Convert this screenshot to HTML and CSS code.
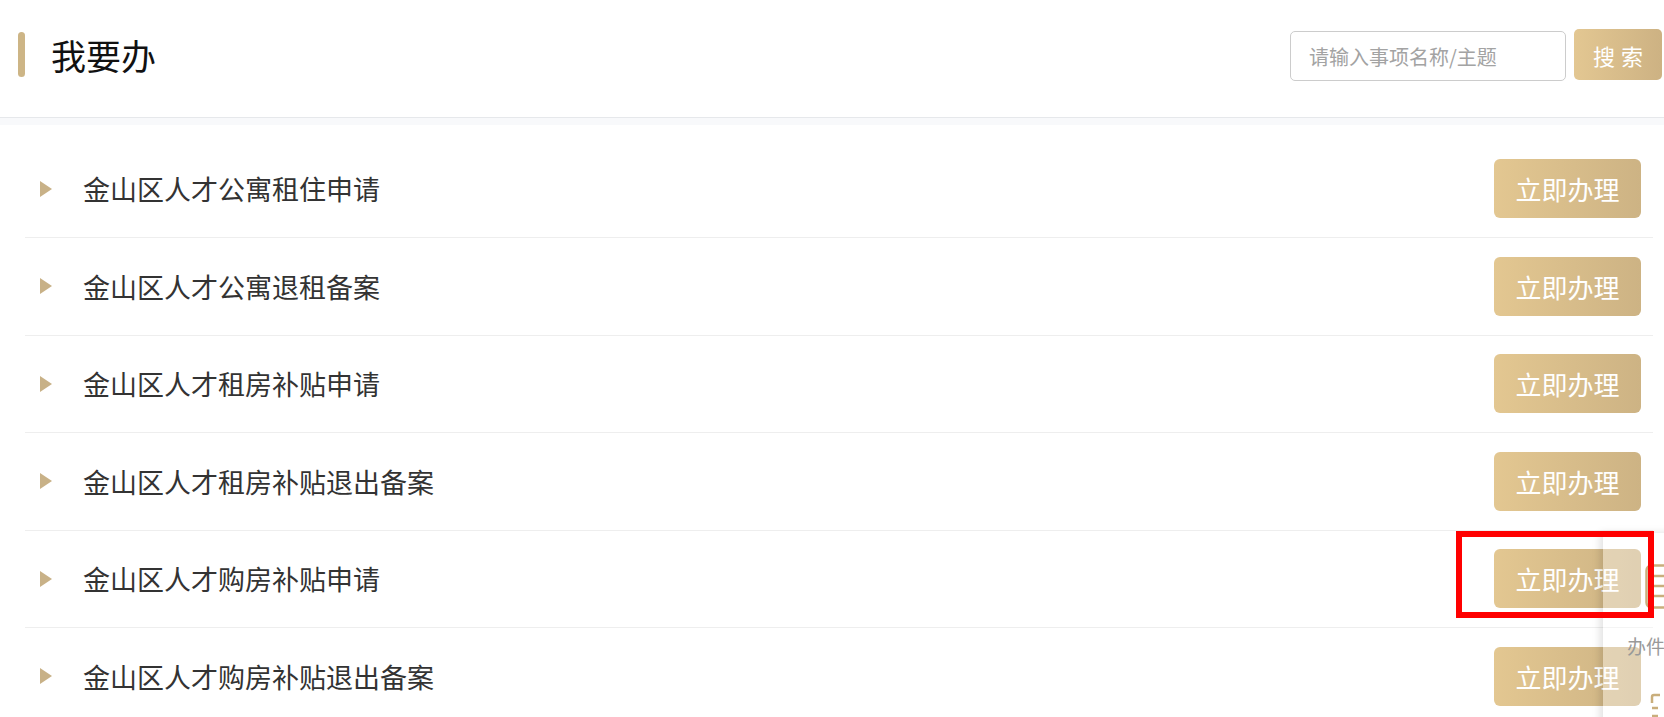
FILE: index.html
```html
<!DOCTYPE html>
<html lang="zh-CN">
<head>
  <meta charset="UTF-8">
  <meta name="viewport" content="width=device-width, initial-scale=1.0">
  <title>我要办</title>
  <link rel="stylesheet" href="styles.css">
</head>
<body>
<header class="page-head">
  <div class="page-title">
    <span class="title-bar"></span>
    <h1>我要办</h1>
  </div>
  <form class="search" onsubmit="return false">
    <input class="search-input" type="text" placeholder="请输入事项名称/主题">
    <button class="search-btn" type="submit">搜索</button>
  </form>
</header>
<div class="head-band"></div>

<ul class="item-list">
  <li class="item"><span class="arrow"></span><span class="item-name">金山区人才公寓租住申请</span><a class="do-btn" href="#">立即办理</a></li>
  <li class="item"><span class="arrow"></span><span class="item-name">金山区人才公寓退租备案</span><a class="do-btn" href="#">立即办理</a></li>
  <li class="item"><span class="arrow"></span><span class="item-name">金山区人才租房补贴申请</span><a class="do-btn" href="#">立即办理</a></li>
  <li class="item"><span class="arrow"></span><span class="item-name">金山区人才租房补贴退出备案</span><a class="do-btn" href="#">立即办理</a></li>
  <li class="item"><span class="arrow"></span><span class="item-name">金山区人才购房补贴申请</span><a class="do-btn" href="#">立即办理</a></li>
  <li class="item"><span class="arrow"></span><span class="item-name">金山区人才购房补贴退出备案</span><a class="do-btn" href="#">立即办理</a></li>
</ul>

<div class="side-panel">
  <svg class="side-icon" width="40" height="46" viewBox="0 0 40 46">
    <rect x="1.5" y="1.5" width="37" height="42" rx="5" fill="none" stroke="#c9ae7c" stroke-width="2.5"/>
    <path d="M9 12h22M9 22h22M9 32h22" stroke="#c9ae7c" stroke-width="2.5" fill="none"/>
  </svg>
  <span class="side-label">办件查询</span>
  <svg class="side-icon2" width="30" height="30" viewBox="0 0 30 30">
    <path d="M2 10V4a2 2 0 0 1 2-2h6M20 2h6a2 2 0 0 1 2 2v6" stroke="#c9ae7c" stroke-width="2.5" fill="none"/>
    <path d="M2 15h6M2 23h6" stroke="#c9ae7c" stroke-width="2.5" fill="none"/>
  </svg>
</div>

<div class="mark-box"></div>
</body>
</html>
```

FILE: styles.css
```css
html, body {
  overflow: hidden;
}

body {
  margin: 0;
  font-family: "Noto Sans CJK SC", "Microsoft YaHei", sans-serif;
  background-color: #fff;
  color: #333;
}

.page-head {
  display: flex;
  justify-content: space-between;
  align-items: flex-start;
  height: 117px;
  padding: 0 2px 0 18px;
  border-bottom: 1px solid #e6e8eb;
}

.page-title {
  display: flex;
  align-items: center;
  margin-top: 32px;
  height: 45px;
}

.title-bar {
  width: 7px;
  height: 45px;
  border-radius: 4px;
  background-color: #cdb586;
}

.page-title h1 {
  margin: 0 0 0 26px;
  font-size: 35px;
  font-weight: normal;
  color: #111;
  line-height: 45px;
}

.search {
  display: flex;
  align-items: flex-start;
  gap: 8px;
  margin: 29px 0 0;
}

.search-input {
  box-sizing: border-box;
  width: 276px;
  height: 50px;
  margin-top: 2px;
  padding: 0 0 0 18px;
  border: 1px solid #ccc;
  border-radius: 5px;
  font-family: inherit;
  font-size: 20px;
  outline: none;
}

.search-input::placeholder {
  color: #a3a3a3;
}

.search-btn {
  width: 88px;
  height: 51px;
  padding: 0 0 0 6px;
  border: none;
  border-radius: 5px;
  background: linear-gradient(to right, #e3c792, #cdb283);
  color: #fff;
  font-family: inherit;
  font-size: 22px;
  letter-spacing: 6px;
  cursor: pointer;
}

.head-band {
  height: 7px;
  background-color: #f8f9fb;
}

.item-list {
  list-style: none;
  margin: 15.5px 11px 0 25px;
  padding: 0;
}

.item {
  display: flex;
  align-items: center;
  height: 96.5px;
  border-bottom: 1px solid #eeeeee;
}

.arrow {
  width: 0;
  height: 0;
  margin-left: 15px;
  border-left: 12px solid #c8b187;
  border-top: 8px solid transparent;
  border-bottom: 8px solid transparent;
}

.item-name {
  margin-left: 31px;
  font-size: 27px;
  color: #333;
}

.do-btn {
  display: flex;
  align-items: center;
  justify-content: center;
  width: 147px;
  height: 59px;
  margin: 0 12px 0 auto;
  border-radius: 6px;
  background: linear-gradient(to right, #e3c791, #cdb384);
  color: #fff;
  font-size: 26px;
  text-decoration: none;
}

/* floating side widget, partly off screen */
.side-panel {
  position: absolute;
  left: 1603px;
  top: 533px;
  width: 124px;
  height: 220px;
  display: flex;
  flex-direction: column;
  align-items: center;
  padding-top: 31px;
  box-sizing: border-box;
  background-color: rgba(255, 255, 255, 0.38);
  box-shadow: -3px 0 8px rgba(0, 0, 0, 0.12);
}

.side-label {
  margin-top: 22px;
  font-size: 19px;
  color: #999;
  white-space: nowrap;
}

.side-icon2 {
  margin-top: 34px;
}

.mark-box {
  position: absolute;
  left: 1456px;
  top: 531px;
  width: 198px;
  height: 87px;
  box-sizing: border-box;
  border: 6px solid #ff0000;
  z-index: 10;
}
```
